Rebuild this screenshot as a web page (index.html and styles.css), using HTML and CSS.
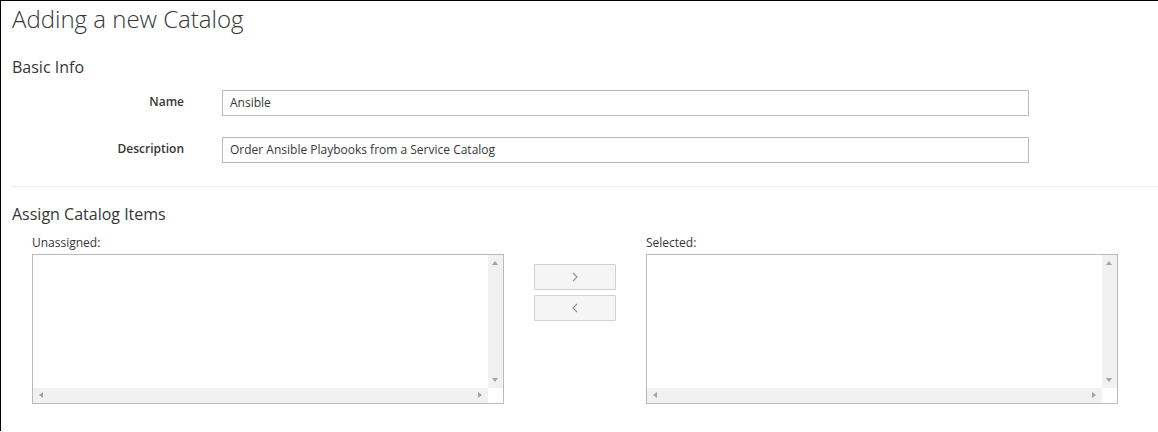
FILE: index.html
```html
<!DOCTYPE html>
<html>
<head>
<meta charset="utf-8">
<link rel="stylesheet" href="styles.css">
</head>
<body>
<div class="frame">
  <h1 class="title">Adding a new Catalog</h1>
  <h3 class="section">Basic Info</h3>
  <div class="form-row">
    <label class="form-label">Name</label>
    <div class="form-input">Ansible</div>
  </div>
  <div class="form-row">
    <label class="form-label">Description</label>
    <div class="form-input">Order Ansible Playbooks from a Service Catalog</div>
  </div>
  <hr class="divider">
  <h3 class="section section-assign">Assign Catalog Items</h3>
  <div class="dual">
    <div class="list-col">
      <div class="list-label">Unassigned:</div>
      <div class="listbox">
        <div class="list-content"></div>
        <div class="vbar"><span class="arr arr-up"></span><span class="arr arr-down"></span></div>
        <div class="hbar"><span class="arr arr-left"></span><span class="arr arr-right"></span></div>
        <div class="corner"></div>
      </div>
    </div>
    <div class="buttons">
      <button class="move-btn"><svg width="6" height="10" viewBox="0 0 6 10"><polyline points="1,1 5,5 1,9" fill="none" stroke="#8b8d8f" stroke-width="1.1"/></svg></button>
      <button class="move-btn"><svg width="6" height="10" viewBox="0 0 6 10"><polyline points="5,1 1,5 5,9" fill="none" stroke="#8b8d8f" stroke-width="1.1"/></svg></button>
    </div>
    <div class="list-col">
      <div class="list-label">Selected:</div>
      <div class="listbox">
        <div class="list-content"></div>
        <div class="vbar"><span class="arr arr-up"></span><span class="arr arr-down"></span></div>
        <div class="hbar"><span class="arr arr-left"></span><span class="arr arr-right"></span></div>
        <div class="corner"></div>
      </div>
    </div>
  </div>
</div>
</body>
</html>
```
FILE: styles.css
```css
html, body {
  margin: 0;
  padding: 0;
  background: #fff;
}
body {
  font-family: "Open Sans", "Liberation Sans", sans-serif;
  color: #363636;
  font-size: 12px;
}
.frame {
  border-top: 1px solid #000;
  border-left: 1px solid #000;
  height: 431px;
  padding-left: 11px;
  box-sizing: border-box;
}
.title {
  margin: 0;
  padding-top: 2px;
  font-size: 24px;
  font-weight: 300;
  line-height: 32px;
  color: #363636;
}
.section {
  margin: 21px 0 0 0;
  font-size: 16px;
  font-weight: 400;
  line-height: 22px;
  color: #363636;
}
.form-row {
  display: grid;
  grid-template-columns: 172px 807px;
  column-gap: 38px;
  align-items: center;
  margin-top: 12px;
}
.form-row + .form-row {
  margin-top: 21px;
}
.form-label {
  text-align: right;
  font-weight: 600;
  font-size: 12px;
  color: #363636;
  margin-top: -4px;
}
.form-input {
  height: 26px;
  box-sizing: border-box;
  border: 1px solid #bbb;
  padding: 0 7px;
  line-height: 24px;
  font-size: 12px;
  color: #363636;
}
.divider {
  border: 0;
  border-top: 1px solid #ededed;
  margin: 23px 0 0 0;
}
.section-assign {
  margin-top: 16px;
}
.dual {
  display: flex;
  align-items: flex-start;
  gap: 30px;
  margin-left: 20px;
  margin-top: 9px;
}
.list-col {
  display: flex;
  flex-direction: column;
  width: 472px;
}
.list-label {
  font-size: 12px;
  line-height: 17px;
  margin-bottom: 3px;
  color: #363636;
}
.listbox {
  width: 472px;
  height: 150px;
  box-sizing: border-box;
  border: 1px solid #bbb;
  background: #fff;
  display: grid;
  grid-template-columns: 1fr 15px;
  grid-template-rows: 1fr 15px;
}
.list-content {
  background: #fff;
}
.vbar {
  background: #f1f1f1;
  position: relative;
}
.hbar {
  background: #f1f1f1;
  position: relative;
}
.corner {
  background: #fff;
}
.arr {
  position: absolute;
  width: 0;
  height: 0;
}
.arr-up {
  top: 6px;
  left: 4px;
  border-left: 3.5px solid transparent;
  border-right: 3.5px solid transparent;
  border-bottom: 4px solid #a3a3a3;
}
.arr-down {
  bottom: 6px;
  left: 4px;
  border-left: 3.5px solid transparent;
  border-right: 3.5px solid transparent;
  border-top: 4px solid #a3a3a3;
}
.arr-left {
  left: 6px;
  top: 4px;
  border-top: 3.5px solid transparent;
  border-bottom: 3.5px solid transparent;
  border-right: 4px solid #a3a3a3;
}
.arr-right {
  right: 6px;
  top: 4px;
  border-top: 3.5px solid transparent;
  border-bottom: 3.5px solid transparent;
  border-left: 4px solid #a3a3a3;
}
.buttons {
  display: flex;
  flex-direction: column;
  gap: 5px;
  padding-top: 10px;
  margin-top: 20px;
}
.move-btn {
  width: 82px;
  height: 26px;
  border: 1px solid #d1d1d1;
  border-radius: 1px;
  background: #f5f5f5;
  padding: 0;
  display: flex;
  align-items: center;
  justify-content: center;
}
.move-btn svg {
  display: block;
}
```
